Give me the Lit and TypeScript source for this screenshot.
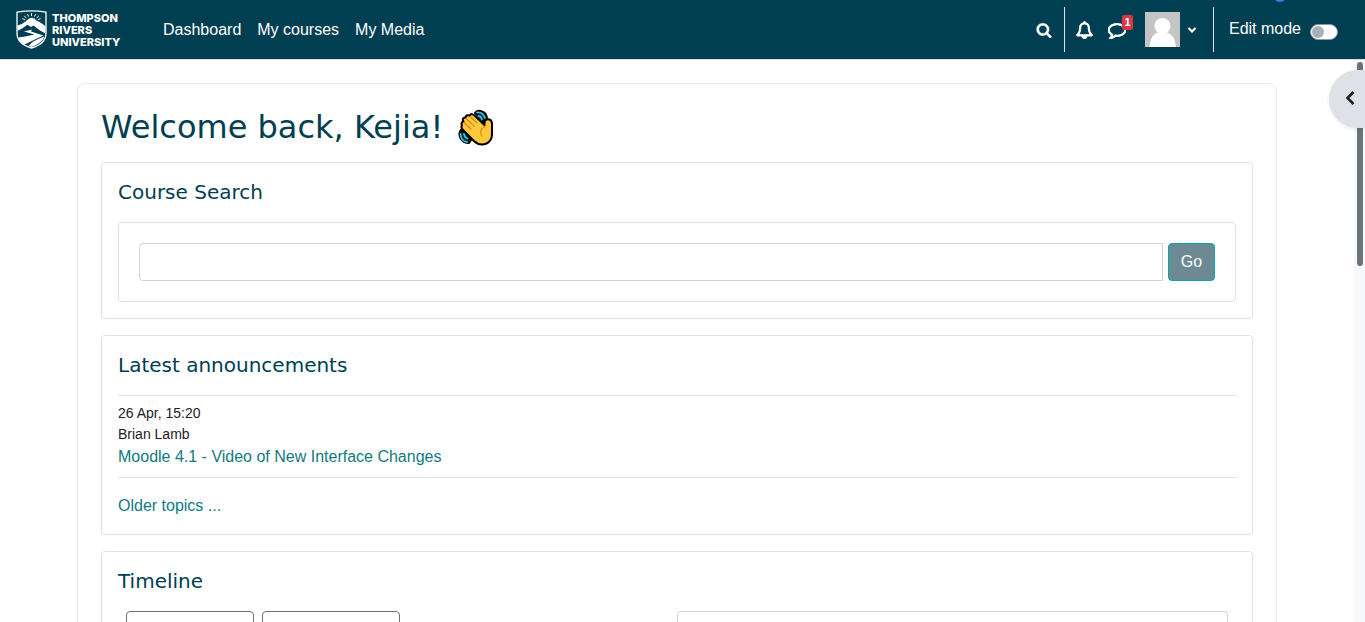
import { LitElement, html, css } from "lit";
import { customElement } from "lit/decorators.js";

@customElement("tru-navbar")
class TruNavbar extends LitElement {
  static styles = css`
    :host { display: block; }
    .bar {
      position: relative; display: flex; align-items: center; height: 59px;
      padding: 0 27px 0 16px; background: #003e51; color: #fff;
      box-shadow: 0 1px 0 #cfe0e8;
    }
    a { color: inherit; text-decoration: none; }
    .brand { display: flex; align-items: center; gap: 5px; margin-right: 33px; }
    .brand svg { display: block; }
    .name { font: 800 11px/12px Inter, "Liberation Sans", sans-serif; width: 70px; }
    .name span { display: block; }
    nav { display: flex; flex: 1; }
    nav a { padding: 0 8px; line-height: 24px; }
    .tools { display: flex; align-items: center; }
    button { border: 0; margin: 0; padding: 0; background: none; color: inherit; font: inherit; display: flex; align-items: center; justify-content: center; }
    .icon { width: 32px; height: 44px; position: relative; }
    .search { width: 40px; }
    .sep { width: 1px; height: 45px; background: #dee2e6; }
    .badge {
      position: absolute; top: 7px; right: 0; width: 11px; height: 15px; border-radius: 2px;
      background: #dc3545; font: 700 11px/15px "Liberation Sans", Arial, sans-serif; text-align: center;
    }
    .bells { margin-left: 4px; display: flex; }
    .user { gap: 7px; margin: 0 16px 0 12px; }
    .user svg { display: block; }
    .edit { display: flex; align-items: center; gap: 9px; margin-left: 15px; line-height: 24px; }
    .edit label { padding-bottom: 2px; }
    .switch {
      appearance: none; margin: 5px 0 0; width: 28px; height: 16px; border-radius: 8px;
      background: #fff; border: 1px solid #8f959e; box-sizing: border-box; padding: 1px;
    }
    .switch::before { content: ""; display: block; width: 12px; height: 12px; border-radius: 50%; background: #a8b0b8; }
    .switch:checked::before { margin-left: 12px; background: #0f8a8f; }
    .cue { position: absolute; right: 78px; top: -12px; width: 14px; height: 14px; border-radius: 50%; background: #3f7de8; }
  `;

  render() {
    return html`
      <header class="bar">
        <a class="brand" href="#" aria-label="Thompson Rivers University">
          <svg width="31" height="39" viewBox="0 0 31 39" fill="none">
            <path d="M1 2.200Q15.500 -.4 30 2.200V23Q30 34 15.500 38Q1 34 1 23Z" stroke="#fff" stroke-width="1.300"/>
            <path d="M1.500 15.500Q6 14.500 9.500 11.500Q15.500 4.500 21 11Q25 12 29.500 16.500V23.500L24 20.500L17.500 15.500L15 17L11.500 14.800L6 18.500L1.500 21Z" fill="#fff"/>
            <path d="M8 21.500L16 19.500L15 21.500L27.500 25.500L21 28.500L8.500 34.500Q4 32 2.500 27.500L9 26.500L18.500 24.500Z" fill="#fff"/>
            <path d="M28.500 26.500Q26.500 33 15.500 37L12.500 35.800Q17.500 30 28.500 26.500Z" fill="#fff"/>
            <path d="M9 9.800L6.300 8.600M10.300 8L8.200 6M12.600 6.600L11.300 4M15.500 6V3.200M18.400 6.600L19.700 4M20.600 8L22.700 6M21.900 9.800L24.600 8.600" stroke="#fff" stroke-width="1"/>
          </svg>
          <span class="name"><span>THOMPSON</span><span>RIVERS</span><span>UNIVERSITY</span></span>
        </a>
        <nav>
          <a href="#">Dashboard</a><a href="#">My courses</a><a href="#">My Media</a>
        </nav>
        <div class="tools">
          <button class="icon search" aria-label="Search">
            <svg width="16" height="16" viewBox="0 0 1792 1792" fill="#fff" stroke="#fff" stroke-width="40"><path d="M1216 832q0-185-131.500-316.500t-316.500-131.500-316.500 131.500-131.500 316.500 131.500 316.500 316.500 131.500 316.500-131.500 131.500-316.500zm512 832q0 52-38 90t-90 38q-54 0-90-38l-343-342q-179 124-399 124-143 0-273.500-55.500t-225-150-150-225-55.500-273.500 55.500-273.500 150-225 225-150 273.500-55.500 273.500 55.500 225 150 150 225 55.500 273.500q0 220-124 399l343 343q37 37 37 90z"/></svg>
          </button>
          <span class="sep"></span>
          <div class="bells">
            <button class="icon" aria-label="Notifications">
              <svg width="17" height="18" viewBox="0 0 1792 1792" fill="#fff" stroke="#fff" stroke-width="110"><path d="M912 1696q0-16-16-16-59 0-101.500-42.500t-42.500-101.500q0-16-16-16t-16 16q0 73 51.500 124.500t124.500 51.500q16 0 16-16zm-666-288h1300q-266-300-266-832 0-51-24-105t-69-103-121.500-80.500-169.500-31.500-169.500 31.500-121.500 80.500-69 103-24 105q0 532-266 832zm1482 0q0 52-38 90t-90 38h-448q0 106-75 181t-181 75-181-75-75-181h-448q-52 0-90-38t-38-90q50-42 91-88t85-119.500 74.500-158.500 50-206 19.500-260q0-152 117-282.500t307-158.500q-8-19-8-39 0-40 28-68t68-28 68 28 28 68q0 20-8 39 190 28 307 158.500t117 282.500q0 139 19.500 260t50 206 74.500 158.500 85 119.500 91 88z"/></svg>
            </button>
            <button class="icon" aria-label="Messages, 1 unread">
              <svg width="18" height="18" viewBox="0 0 1792 1792" fill="#fff" stroke="#fff" stroke-width="100"><path d="M896 384q-204 0-381.500 69.500t-282 187.500-104.500 255q0 112 71.500 213.500t201.500 175.500l87 50-27 96q-24 91-70 172 152-63 275-171l43-38 57 6q69 8 130 8 204 0 381.500-69.500t282-187.500 104.500-255-104.500-255-282-187.500-381.500-69.500zm896 512q0 174-120 321.500t-326 233-450 85.500q-70 0-145-8-198 175-460 242-49 14-114 22h-5q-15 0-27-10.500t-16-27.500v-1q-3-4-.5-12t2-10 4.500-9.500l6-9 7-8.500 8-9q7-8 31-34.500t34.500-38 31-39.500 32.500-51 27-59 26-76q-157-89-247.500-220t-90.500-281q0-130 71-248.500t191-204.500 286-136.500 348-50.500 348 50.500 286 136.500 191 204.500 71 248.500z"/></svg>
              <span class="badge">1</span>
            </button>
          </div>
          <button class="user" aria-label="User menu">
            <svg width="35" height="35" viewBox="0 0 35 35"><path fill="#c4c4c4" d="M0 0h35v35H0z"/><circle cx="17.500" cy="14" r="8" fill="#fff"/><path fill="#fff" d="M4.500 35Q5 22 14 20H21Q30 22 31 35Z"/></svg>
            <svg width="10" height="8" viewBox="0 0 10 8" fill="none" stroke="#fff" stroke-width="2.200"><path d="M1.500 2L5 5.500L8.500 2"/></svg>
          </button>
          <span class="sep"></span>
          <div class="edit">
            <label for="edit">Edit mode</label>
            <input id="edit" class="switch" type="checkbox" role="switch" />
          </div>
        </div>
        <span class="cue"></span>
      </header>
    `;
  }
}

@customElement("dash-block")
class DashBlock extends LitElement {
  static properties = { heading: { type: String } };
  declare heading: string;
  static styles = css`
    :host { display: block; }
    section { border: 1px solid #dee2e6; border-radius: 4px; padding: 16px; background: #fff; }
    h2 { margin: 0 0 16px; font: 400 20px/27px "DejaVu Sans", Verdana, sans-serif; color: #003e51; }
  `;
  render() {
    return html`<section><h2>${this.heading}</h2><slot></slot></section>`;
  }
}

@customElement("app-root")
class AppRoot extends LitElement {
  static styles = css`
    :host {
      display: flex; flex-direction: column; height: 100vh; overflow: hidden; position: relative;
      background: #fff; color: #1d2125; font: 400 16px/24px "Liberation Sans", Arial, sans-serif;
    }
    tru-navbar { position: relative; z-index: 1; }
    .body { display: flex; flex: 1; min-height: 0; }
    main { flex: 1; min-width: 0; overflow: hidden; padding-top: 24px; }
    .page {
      box-sizing: border-box; max-width: 1200px; margin: 0 auto; padding: 23px;
      border: 1px solid #e9ebee; border-radius: 8px;
    }
    h1 {
      display: flex; align-items: center; gap: 15px; margin: 0 0 14px;
      font: 400 32px/41px "DejaVu Sans", Verdana, sans-serif; color: #003e51;
    }
    .blocks { display: flex; flex-direction: column; gap: 16px; }
    input, button { box-sizing: border-box; font: inherit; height: 38px; margin: 0; }
    input { border: 1px solid #ced4da; padding: 0 12px; background: #fff; min-width: 0; }
    .search { display: flex; gap: 5px; padding: 20px; border: 1px solid #dee2e6; border-radius: 4px; }
    .search input { flex: 1; border-radius: 4px 0 0 4px; }
    .go { width: 47px; padding: 0; border: 1px solid #00a7b5; border-radius: 4px; background: #6d8a94; color: #fff; }
    .post { border: solid #dee2e6; border-width: 1px 0; padding: 7px 0 8px; }
    .meta { font-size: 14px; line-height: 21px; }
    a { color: #0f7b82; text-decoration: none; }
    .older { margin-top: 16px; }
    .filters { display: grid; grid-template-columns: 1fr 1fr; padding: 0 8px; }
    .drops { display: flex; gap: 8px; }
    .drops button { background: #fff; border: 1px solid #6a737b; border-radius: 4px; }
    .days { width: 128px; }
    .sort { width: 138px; }
    .filters input { border-radius: 4px; }
    .scroll { width: 11px; background: #f8f9fa; padding: 3px 2px 0 3px; box-sizing: border-box; }
    .thumb { height: 204px; border-radius: 3px; background: #6a737b; }
    .drawer {
      position: absolute; right: 0; top: 70px; width: 36px; height: 58px; border: 0;
      border-radius: 29px 0 0 29px; background: #dee2e6; padding: 0 0 2px 5px;
      box-shadow: 0 2px 4px rgba(0, 0, 0, 0.08); display: flex; align-items: center; justify-content: center;
    }
  `;

  render() {
    return html`
      <tru-navbar></tru-navbar>
      <div class="body">
        <main>
          <div class="page">
            <h1>
              Welcome back, Kejia!
              <svg width="36" height="37" viewBox="0 0 36 37" fill="none" stroke-linecap="round" stroke-linejoin="round" role="img" aria-label="Waving hand">
                <path d="M17 4Q19 .5 24 2.500Q29 4.500 29 10L27 14L21 8ZM3 21Q0 24 2.500 29Q5 34 11 34L13 31L5 21Z" fill="#10181c" stroke="#000" stroke-width="2"/>
                <path d="M19 3.500Q25 3 27 9M20.500 7Q23 7 24 10.500M2.500 25Q3 32 9 33M6 25Q6.500 28.500 9.500 29.500" stroke="#38c0e6" stroke-width="1.800"/>
                <path d="M4 16Q2.500 13.500 5.500 12.500Q3.500 9 7.500 8.500Q8 5.500 11.500 6.500Q14 3.500 17 7L26.500 16Q26 11.500 28.500 10.500Q33 9.500 34 14V25Q34 32 28.500 34.500Q22 37.500 16 32L5 21Q2.500 18.500 4 16Z" fill="#ffc83d" stroke="#000" stroke-width="2"/>
                <path d="M6 13.500L13 20M8 9.500L16 17M12.500 8L19 14M27 17.500Q21 20 23.500 27" stroke="#d68a14" stroke-width="1.200"/>
              </svg>
            </h1>
            <div class="blocks">
              <dash-block heading="Course Search">
                <form class="search" @submit=${(e: Event) => e.preventDefault()}>
                  <input type="text" aria-label="Search courses" />
                  <button class="go">Go</button>
                </form>
              </dash-block>
              <dash-block heading="Latest announcements">
                <div class="post">
                  <div class="meta">26 Apr, 15:20</div>
                  <div class="meta">Brian Lamb</div>
                  <a href="#">Moodle 4.1 - Video of New Interface Changes</a>
                </div>
                <div class="older"><a href="#">Older topics ...</a></div>
              </dash-block>
              <dash-block heading="Timeline">
                <div class="filters">
                  <div class="drops">
                    <button class="days" aria-label="Filter timeline by date"></button>
                    <button class="sort" aria-label="Sort timeline items"></button>
                  </div>
                  <input type="text" aria-label="Search by activity type or name" />
                </div>
              </dash-block>
            </div>
          </div>
        </main>
        <div class="scroll"><div class="thumb"></div></div>
      </div>
      <button class="drawer" aria-label="Open block drawer">
        <svg width="10" height="14" viewBox="0 0 10 14" fill="none" stroke="#1d2125" stroke-width="2.600"><path d="M8.500 1L2.500 7L8.500 13"/></svg>
      </button>
    `;
  }
}
